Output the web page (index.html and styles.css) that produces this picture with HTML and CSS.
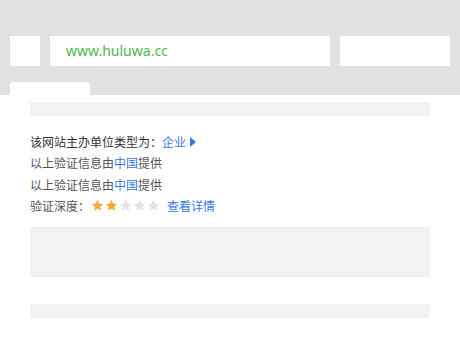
FILE: index.html
```html
<!DOCTYPE html>
<html lang="zh-CN">
  <head>
    <meta charset="UTF-8" />
    <title>huluwa.cc</title>
    <link rel="stylesheet" href="styles.css">
  </head>
  <body>
    <div class="header">
      <div class="search-row">
        <div class="box box-icon"></div>
        <div class="box box-url">www.huluwa.cc</div>
        <div class="box box-btn"></div>
      </div>
      <div class="tab"></div>
    </div>

    <div class="content">
      <div class="bar"></div>

      <div class="info">
        <p class="line line-main">该网站主办单位类型为：<a href="#" class="link">企业</a><span class="arrow"></span></p>
        <p class="line">以上验证信息由<a href="#" class="link">中国</a>提供</p>
        <p class="line">以上验证信息由<a href="#" class="link">中国</a>提供</p>
        <p class="line">验证深度：<span class="stars">
          <svg class="star on" viewBox="0 0 24 24"><path d="M12 1.5l3.1 6.9 7.4.7-5.6 5 1.7 7.4L12 17.7l-6.6 3.8 1.7-7.4-5.6-5 7.4-.7z"/></svg>
          <svg class="star on" viewBox="0 0 24 24"><path d="M12 1.5l3.1 6.9 7.4.7-5.6 5 1.7 7.4L12 17.7l-6.6 3.8 1.7-7.4-5.6-5 7.4-.7z"/></svg>
          <svg class="star" viewBox="0 0 24 24"><path d="M12 1.5l3.1 6.9 7.4.7-5.6 5 1.7 7.4L12 17.7l-6.6 3.8 1.7-7.4-5.6-5 7.4-.7z"/></svg>
          <svg class="star" viewBox="0 0 24 24"><path d="M12 1.5l3.1 6.9 7.4.7-5.6 5 1.7 7.4L12 17.7l-6.6 3.8 1.7-7.4-5.6-5 7.4-.7z"/></svg>
          <svg class="star" viewBox="0 0 24 24"><path d="M12 1.5l3.1 6.9 7.4.7-5.6 5 1.7 7.4L12 17.7l-6.6 3.8 1.7-7.4-5.6-5 7.4-.7z"/></svg>
        </span><a href="#" class="link details">查看详情</a></p>
      </div>

      <div class="block"></div>
      <div class="bar bar-bottom"></div>
    </div>
  </body>
</html>
```

FILE: styles.css
```css
* {
  box-sizing: border-box;
}
body {
  margin: 0;
  padding: 0;
  background-color: white;
  font-family: "Noto Sans", "Noto Sans CJK SC", sans-serif;
}
.header {
  background-color: #e1e1e1;
  height: 95px;
  padding: 36px 10px 0;
  display: flex;
  flex-direction: column;
}
.search-row {
  display: flex;
  gap: 10px;
  height: 30px;
}
.box {
  background-color: white;
}
.box-icon {
  width: 30px;
}
.box-url {
  width: 280px;
  padding-left: 16px;
  color: #4cb84c;
  font-size: 14px;
  line-height: 30px;
}
.box-btn {
  width: 110px;
}
.tab {
  margin-top: 16px;
  width: 80px;
  height: 13px;
  background-color: white;
  border-radius: 4px 4px 0 0;
}
.content {
  padding: 7px 30px 0;
}
.bar {
  height: 14px;
  background-color: #f2f2f2;
}
.info {
  padding-top: 15px;
}
.line {
  margin: 0;
  height: 21.3px;
  display: flex;
  align-items: center;
  font-family: "Noto Sans CJK SC", sans-serif;
  font-size: 12px;
  color: #555;
}
.line-main {
  color: #333;
}
.link {
  color: #3a75e6;
  text-decoration: none;
}
.arrow {
  margin-left: 4px;
  width: 0;
  height: 0;
  border-top: 5px solid transparent;
  border-bottom: 5px solid transparent;
  border-left: 6px solid #3a75e6;
}
.stars {
  display: flex;
  gap: 1px;
  margin-left: 1px;
}
.star {
  width: 13px;
  height: 13px;
  fill: #e3e3e3;
}
.star.on {
  fill: #f8a930;
}
.details {
  margin-left: 7px;
}
.block {
  margin-top: 11px;
  height: 50px;
  background-color: #f2f2f2;
}
.bar-bottom {
  margin-top: 27px;
}
```
